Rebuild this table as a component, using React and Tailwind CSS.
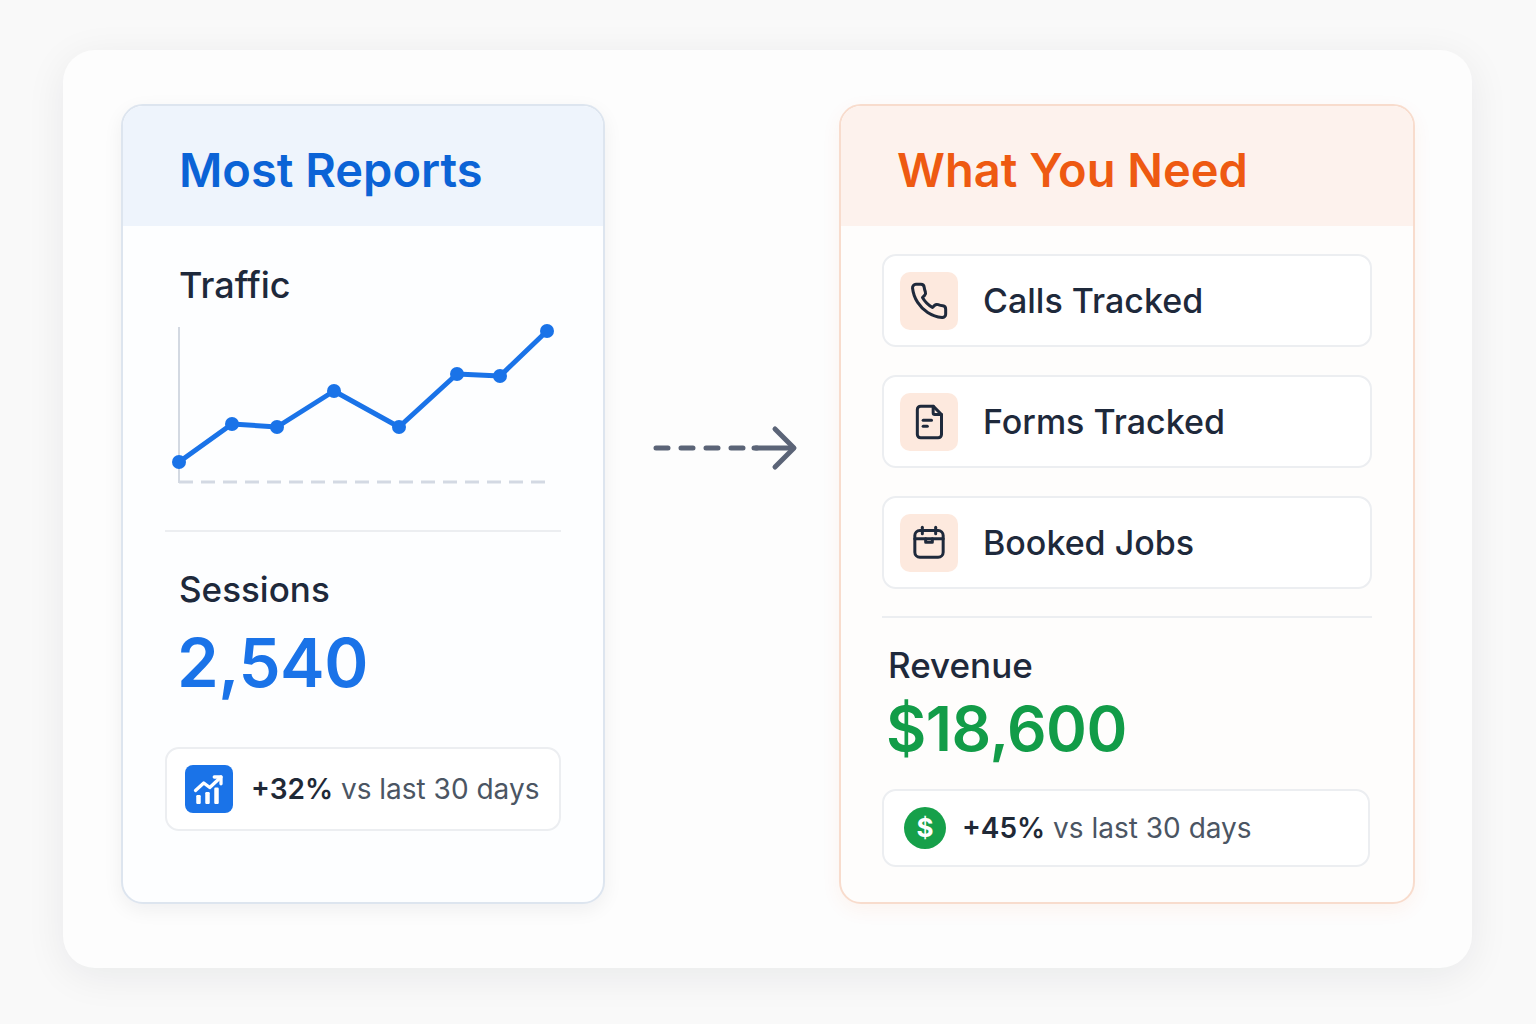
import React from "react";

const font = { fontFamily: "Inter, 'Noto Sans', sans-serif" };

function TrafficChart() {
  const pts = [
    [11, 144],
    [64, 106],
    [109, 109],
    [166, 73],
    [231, 109],
    [289, 56],
    [332, 58],
    [379, 13],
  ];
  return (
    <svg width="392" height="170" viewBox="0 0 392 170" className="block">
      <line x1="11" y1="9" x2="11" y2="165" stroke="#d3d9e2" strokeWidth="2" />
      <line x1="11" y1="164" x2="384" y2="164" stroke="#d3d9e3" strokeWidth="3" strokeDasharray="14 8" />
      <polyline
        points={pts.map((p) => p.join(",")).join(" ")}
        fill="none"
        stroke="#1a73e8"
        strokeWidth="5"
        strokeLinejoin="round"
        strokeLinecap="round"
      />
      {pts.map((p, i) => (
        <circle key={i} cx={p[0]} cy={p[1]} r="7" fill="#1a73e8" />
      ))}
    </svg>
  );
}

function PhoneIcon() {
  return (
    <svg width="40" height="40" viewBox="0 0 24 24" fill="none" stroke="#1e293b" strokeWidth="1.8" strokeLinecap="round" strokeLinejoin="round">
      <path d="M22 16.92v3a2 2 0 0 1-2.18 2 19.79 19.79 0 0 1-8.63-3.07 19.5 19.5 0 0 1-6-6 19.79 19.79 0 0 1-3.07-8.67A2 2 0 0 1 4.11 2h3a2 2 0 0 1 2 1.72 12.84 12.84 0 0 0 .7 2.81 2 2 0 0 1-.45 2.11L8.09 9.91a16 16 0 0 0 6 6l1.27-1.27a2 2 0 0 1 2.11-.45 12.84 12.84 0 0 0 2.81.7A2 2 0 0 1 22 16.92z" />
    </svg>
  );
}

function FileIcon() {
  return (
    <svg width="40" height="40" viewBox="0 0 24 24" fill="none" stroke="#1e293b" strokeWidth="1.8" strokeLinecap="round" strokeLinejoin="round">
      <path d="M7 2.5h7.5l5 5V19.5a2 2 0 0 1-2 2H7a2 2 0 0 1-2-2v-15a2 2 0 0 1 2-2z" />
      <path d="M14.5 2.5v4a1 1 0 0 0 1 1h4" />
      <path d="M8.5 11h5" />
      <path d="M8.5 14.5h2.5" />
    </svg>
  );
}

function CalendarIcon() {
  return (
    <svg width="40" height="40" viewBox="0 0 24 24" fill="none" stroke="#1e293b" strokeWidth="1.8" strokeLinecap="round" strokeLinejoin="round">
      <rect x="3.5" y="4.5" width="17" height="16" rx="3" />
      <path d="M8 2.5v4" />
      <path d="M16 2.5v4" />
      <path d="M3.5 9.5h17" />
      <path d="M10 9.5v2h4v-2" />
    </svg>
  );
}

function GrowthIcon() {
  return (
    <svg width="36" height="36" viewBox="0 0 24 24" fill="none">
      <rect x="3.5" y="16" width="3" height="6" rx="0.8" fill="#fff" />
      <rect x="9.5" y="14" width="3" height="8" rx="0.8" fill="#fff" />
      <rect x="15.5" y="11" width="3" height="11" rx="0.8" fill="#fff" />
      <polyline points="3,13 8.5,8 12.5,11 20,4" stroke="#fff" strokeWidth="2.2" strokeLinecap="round" strokeLinejoin="round" />
      <polyline points="15.5,4 20,4 20,8.5" stroke="#fff" strokeWidth="2.2" strokeLinecap="round" strokeLinejoin="round" />
    </svg>
  );
}

function DashedArrow() {
  return (
    <svg width="150" height="50" viewBox="0 0 150 50">
      <line x1="3" y1="25" x2="104" y2="25" stroke="#5b6477" strokeWidth="5" strokeLinecap="round" strokeDasharray="12 13" />
      <line x1="101" y1="25" x2="140" y2="25" stroke="#5b6477" strokeWidth="5" strokeLinecap="round" />
      <polyline points="122,6 141,25 122,44" fill="none" stroke="#5b6477" strokeWidth="5" strokeLinecap="round" strokeLinejoin="round" />
    </svg>
  );
}

function Item({ icon, label }) {
  return (
    <div className="flex h-[93px] items-center rounded-[14px] border-2 border-[#eceef1] bg-white pl-[16px]">
      <div className="flex h-[58px] w-[58px] items-center justify-center rounded-[10px] bg-[#fde9de]">{icon}</div>
      <span className="ml-[25px] text-[34px] font-medium leading-none text-[#1e293b]">{label}</span>
    </div>
  );
}

export default function App() {
  return (
    <div className="min-h-screen w-full bg-[#f9f9f9] pt-[50px]" style={font}>
      <div className="flex h-[918px] w-[1409px] ml-[63px] items-start rounded-[32px] bg-[#fdfdfd] pt-[54px] pl-[58px] shadow-[0_8px_40px_rgba(15,23,42,0.07)]">
        {/* Left card */}
        <div className="flex h-[800px] w-[484px] flex-col overflow-hidden rounded-[22px] border-2 border-[#dde5ef] bg-[#fdfeff] shadow-[0_6px_20px_rgba(15,23,42,0.06)]">
          <div className="flex h-[120px] items-center bg-[#eef4fc] pl-[56px] pt-[6px]">
            <h2 className="text-[47px] font-semibold leading-none text-[#0b63d6]">Most Reports</h2>
          </div>
          <div className="flex flex-col px-[42px]">
            <div className="mt-[37px] pl-[14px] text-[36px] font-medium leading-[44px] text-[#1e293b]">Traffic</div>
            <div className="mt-[11px] pl-[3px]">
              <TrafficChart />
            </div>
            <div className="mt-[42px] h-[2px] bg-[#eceef1]" />
            <div className="mt-[35px] pl-[14px] text-[35px] font-medium leading-[44px] text-[#1e293b]">Sessions</div>
            <div className="mt-[12px] pl-[12px] text-[67px] font-semibold leading-[80px] tracking-[-0.5px] text-[#1a73e8]">2,540</div>
            <div className="mt-[44px] flex h-[84px] items-center rounded-[14px] border-2 border-[#eceef1] bg-white pl-[18px]">
              <div className="flex h-[48px] w-[48px] items-center justify-center rounded-[8px] bg-[#1a73e8]">
                <GrowthIcon />
              </div>
              <span className="ml-[18px] text-[28px] leading-none text-[#4b5563]">
                <span className="font-semibold text-[#1f2937]">+32%</span> vs last 30 days
              </span>
            </div>
          </div>
        </div>

        {/* Arrow */}
        <div className="flex w-[234px] justify-center pt-[319px]">
          <div className="ml-[12px]">
            <DashedArrow />
          </div>
        </div>

        {/* Right card */}
        <div className="flex h-[800px] w-[576px] flex-col overflow-hidden rounded-[22px] border-2 border-[#f8dccd] bg-[#fefdfc] shadow-[0_6px_20px_rgba(234,88,12,0.06)]">
          <div className="flex h-[120px] items-center bg-[#fdf2ed] pl-[56px] pt-[6px]">
            <h2 className="text-[47px] font-semibold leading-none text-[#ee5a12]">What You Need</h2>
          </div>
          <div className="flex flex-col px-[41px] pt-[28px]">
            <div className="flex flex-col gap-[28px]">
              <Item icon={<PhoneIcon />} label="Calls Tracked" />
              <Item icon={<FileIcon />} label="Forms Tracked" />
              <Item icon={<CalendarIcon />} label="Booked Jobs" />
            </div>
            <div className="mt-[27px] h-[2px] bg-[#eceef1]" />
            <div className="mt-[25px] pl-[6px] text-[35px] font-medium leading-[44px] text-[#1e293b]">Revenue</div>
            <div className="mt-[7px] pl-[4px] text-[62px] font-semibold leading-[70px] tracking-[-0.5px] text-[#129c48]">$18,600</div>
            <div className="mt-[25px] mr-[2px] flex h-[78px] items-center rounded-[14px] border-2 border-[#eceef1] bg-white pl-[20px]">
              <div className="flex h-[42px] w-[42px] items-center justify-center rounded-full bg-[#16a04a]">
                <span className="text-[26px] font-bold leading-none text-white">$</span>
              </div>
              <span className="ml-[16px] text-[28px] leading-none text-[#4b5563]">
                <span className="font-semibold text-[#1f2937]">+45%</span> vs last 30 days
              </span>
            </div>
          </div>
        </div>
      </div>
    </div>
  );
}
